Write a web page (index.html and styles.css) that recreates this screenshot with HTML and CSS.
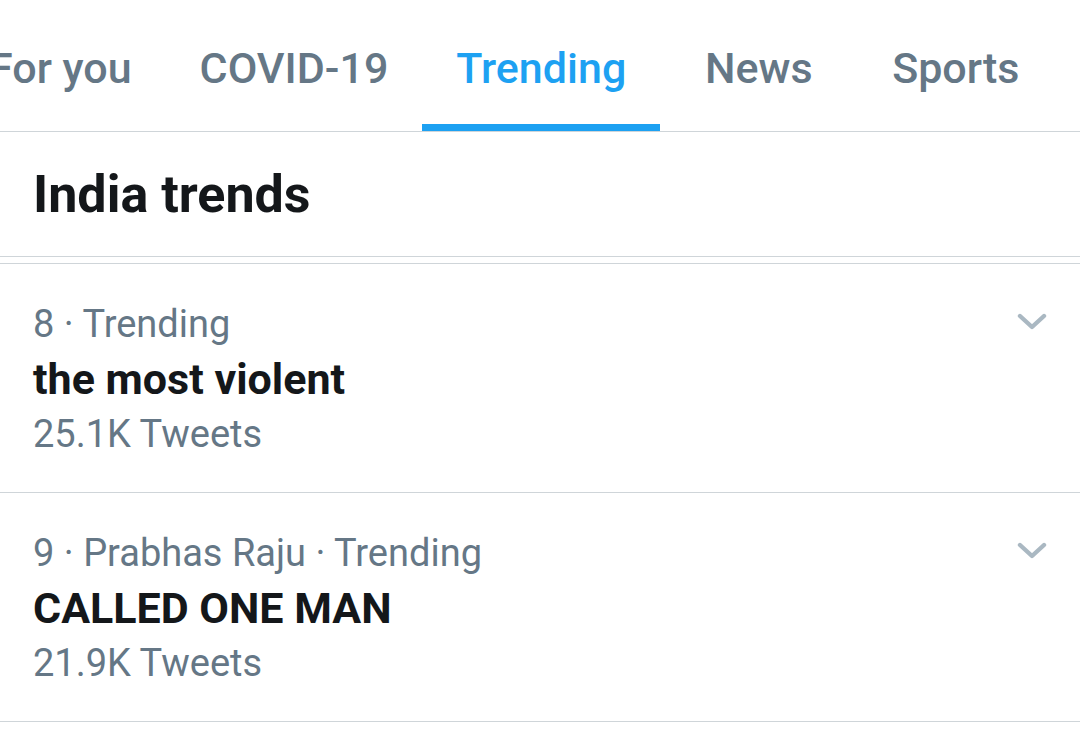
FILE: index.html
```html
<!DOCTYPE html>
<html lang="en">
<head>
<meta charset="utf-8">
<title>India trends</title>
<link rel="stylesheet" href="styles.css">
</head>
<body>
<nav class="tabs">
  <div class="tab-strip">
    <a class="tab">For you</a>
    <a class="tab">COVID-19</a>
    <a class="tab tab-active">Trending</a>
    <a class="tab">News</a>
    <a class="tab">Sports</a>
  </div>
</nav>
<header class="section-head">
  <h2 class="section-title">India trends</h2>
</header>
<div class="spacer"></div>
<ul class="trends">
  <li class="trend">
    <div class="trend-body">
      <div class="trend-meta">8 · Trending</div>
      <div class="trend-name">the most violent</div>
      <div class="trend-count">25.1K Tweets</div>
    </div>
    <svg class="chevron" viewBox="0 0 30 17" width="30" height="17" aria-hidden="true"><path d="M3 3 L15 14 L27 3" fill="none" stroke="#aab8c2" stroke-width="4.4" stroke-linecap="round" stroke-linejoin="round"/></svg>
  </li>
  <li class="trend">
    <div class="trend-body">
      <div class="trend-meta">9 · Prabhas Raju · Trending</div>
      <div class="trend-name">CALLED ONE MAN</div>
      <div class="trend-count">21.9K Tweets</div>
    </div>
    <svg class="chevron" viewBox="0 0 30 17" width="30" height="17" aria-hidden="true"><path d="M3 3 L15 14 L27 3" fill="none" stroke="#aab8c2" stroke-width="4.4" stroke-linecap="round" stroke-linejoin="round"/></svg>
  </li>
</ul>
</body>
</html>
```

FILE: styles.css
```css
* { box-sizing: border-box; }
html, body {
  margin: 0;
  padding: 0;
  background: #ffffff;
  font-family: Roboto, "Noto Sans", Arial, sans-serif;
  overflow: hidden;
}
.tabs {
  height: 132px;
  border-bottom: 1px solid #cfd5d9;
  overflow: hidden;
}
.tab-strip {
  display: flex;
  margin-left: -45px;
  white-space: nowrap;
}
.tab {
  flex: none;
  min-width: 197px;
  height: 131px;
  padding: 44px 34px 0;
  text-align: center;
  font-size: 43px;
  font-weight: 500;
  line-height: 49px;
  color: #657786;
  border-bottom: 7px solid transparent;
}
.tab-active {
  color: #1da1f2;
  border-bottom-color: #1da1f2;
}
.section-head {
  padding: 32px 33px 31px;
  border-bottom: 1px solid #cfd5d9;
}
.section-title {
  margin: 0;
  font-size: 52px;
  font-weight: 700;
  line-height: 61px;
  color: #14171a;
}
.spacer {
  height: 7px;
  border-bottom: 1px solid #cfd5d9;
}
.trends {
  list-style: none;
  margin: 0;
  padding: 0;
}
.trend {
  display: flex;
  align-items: flex-start;
  justify-content: space-between;
  padding: 34px 33px 32px 33px;
  border-bottom: 1px solid #cfd5d9;
}
.trend-meta,
.trend-count {
  font-size: 38px;
  line-height: 52px;
  color: #657786;
}
.trend-name {
  font-size: 43px;
  font-weight: 700;
  line-height: 58px;
  color: #14171a;
}
.chevron {
  flex: none;
  margin-top: 15px;
}
```
